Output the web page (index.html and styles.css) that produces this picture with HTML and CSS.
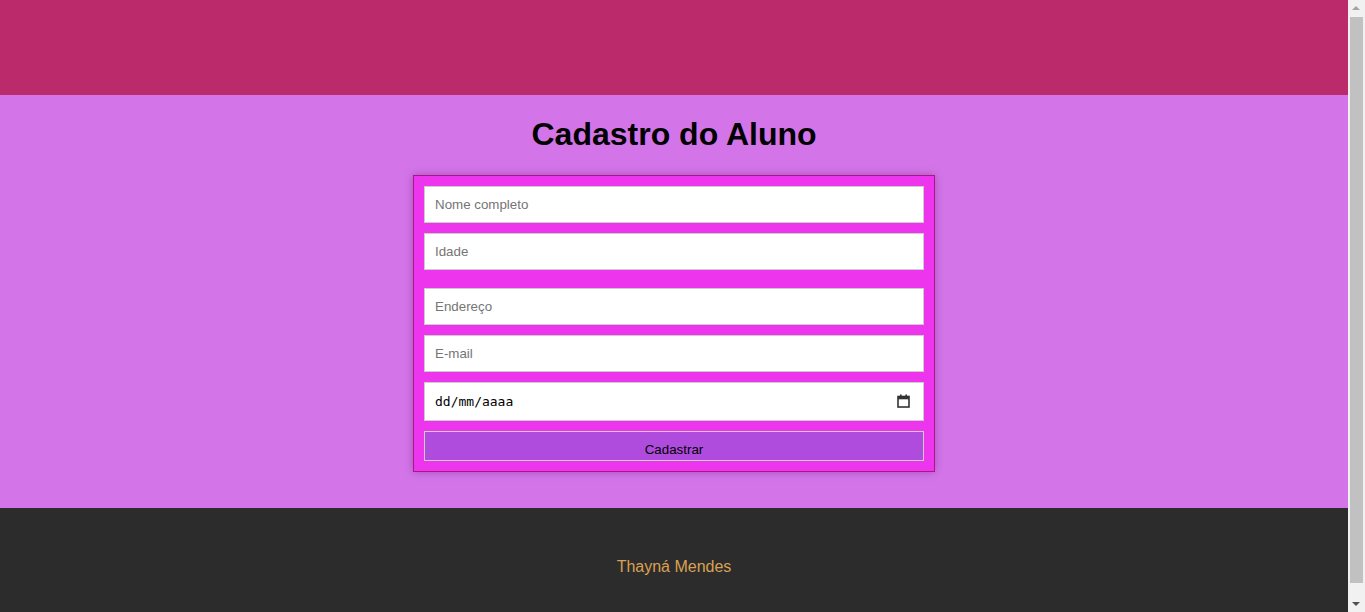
FILE: index.html
```html
<!DOCTYPE html>
<html lang="pt-BR">
<head>
<meta charset="utf-8">
<title>Cadastro do Aluno</title>
<link rel="stylesheet" href="styles.css">
</head>
<body>
<header class="topbar"></header>
<main class="content">
  <h1 class="title">Cadastro do Aluno</h1>
  <form class="form-card">
    <input class="field" type="text" placeholder="Nome completo">
    <input class="field field-spaced" type="text" placeholder="Idade">
    <input class="field" type="text" placeholder="Endereço">
    <input class="field" type="text" placeholder="E-mail">
    <div class="date-field">
      <span class="date-text">dd/mm/aaaa</span>
      <svg class="cal-icon" width="13" height="14" viewBox="0 0 13 14" aria-hidden="true">
        <rect x="1" y="2.5" width="11" height="10.5" fill="none" stroke="#333" stroke-width="1.6"/>
        <rect x="1" y="2.5" width="11" height="2.8" fill="#333"/>
        <rect x="3" y="0.5" width="1.6" height="2.5" fill="#333"/>
        <rect x="8.4" y="0.5" width="1.6" height="2.5" fill="#333"/>
      </svg>
    </div>
    <button class="submit" type="button">Cadastrar</button>
  </form>
</main>
<footer class="footer">
  <p class="author">Thayná Mendes</p>
</footer>
<div class="scrollbar" aria-hidden="true">
  <span class="sb-arrow sb-up"></span>
  <span class="sb-thumb"></span>
  <span class="sb-arrow sb-down"></span>
</div>
</body>
</html>
```
FILE: styles.css
```css
* {
  box-sizing: border-box;
}

html {
  scrollbar-width: none;
}

body {
  margin: 0;
  padding-right: 17px;
  font-family: "Liberation Sans", Arial, sans-serif;
}

.topbar {
  height: 95px;
  background: #bb2a6b;
}

.content {
  background: #d375e9;
  display: flex;
  flex-direction: column;
  align-items: center;
  padding: 21px 0 36px;
}

.title {
  margin: 0 0 22px;
  font-size: 32px;
  line-height: 37px;
  font-weight: bold;
  color: #000;
}

.form-card {
  width: 522px;
  background: #ee35ee;
  border: 1px solid #a8168c;
  box-shadow: 0 0 8px rgba(90, 0, 80, 0.35);
  padding: 10px;
  display: flex;
  flex-direction: column;
  gap: 10px;
  margin: 0;
}

.field {
  display: block;
  width: 500px;
  height: 37px;
  margin: 0;
  padding: 0 10px;
  border: 1px solid #cccccc;
  background: #fff;
  font-family: "Liberation Sans", Arial, sans-serif;
  font-size: 13.333px;
  color: #000;
  outline: none;
}

.field::placeholder {
  color: #757575;
}

.field-spaced {
  margin-bottom: 8px;
}

.date-field {
  width: 500px;
  height: 39px;
  border: 1px solid #cccccc;
  background: #fff;
  display: flex;
  align-items: center;
  padding: 0 13px 1px 10px;
}

.date-text {
  font-family: "DejaVu Sans Mono", "Liberation Mono", monospace;
  font-size: 13px;
  color: #000;
}

.cal-icon {
  margin-left: auto;
  display: block;
}

.submit {
  display: block;
  width: 500px;
  height: 30px;
  margin: 0;
  padding: 9px 0 1px;
  border: 1px solid #cccccc;
  background: #b04cdd;
  font-family: "Liberation Sans", Arial, sans-serif;
  font-size: 13.333px;
  line-height: 16px;
  color: #000;
  text-align: center;
}

.footer {
  background: #2c2c2c;
  padding: 50px 0;
  text-align: center;
}

.author {
  margin: 0;
  font-size: 16px;
  line-height: 18px;
  color: #d9a152;
}

.scrollbar {
  position: fixed;
  top: 0;
  right: 0;
  width: 17px;
  height: 100vh;
  background: #f1f1f1;
  display: flex;
  flex-direction: column;
  align-items: center;
}

.sb-arrow {
  display: block;
  height: 17px;
  width: 17px;
  position: relative;
}

.sb-arrow::after {
  content: "";
  position: absolute;
  left: 4px;
  width: 0;
  height: 0;
  border-left: 4px solid transparent;
  border-right: 4px solid transparent;
}

.sb-up::after {
  top: 6px;
  border-bottom: 4px solid #a3a3a3;
}

.sb-down::after {
  top: 7px;
  border-top: 4px solid #505050;
}

.sb-thumb {
  display: block;
  width: 13px;
  height: 566px;
  background: #c1c1c1;
  margin-bottom: auto;
}
```
